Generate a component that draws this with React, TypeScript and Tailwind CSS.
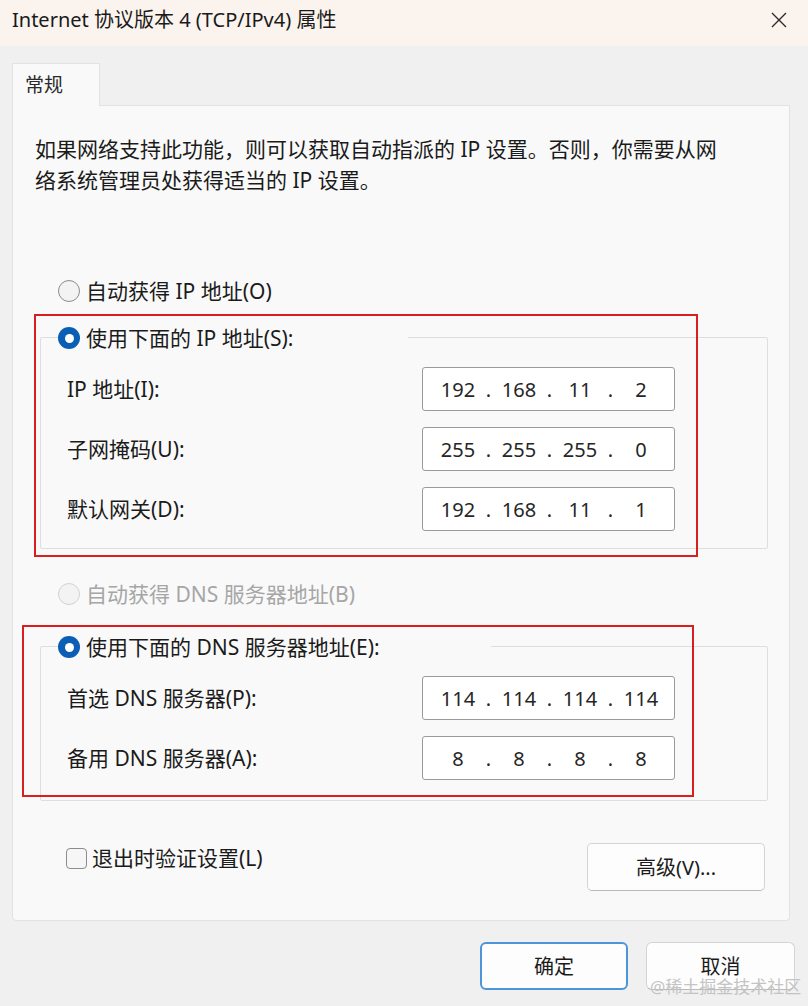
import type { ReactNode } from "react";

const font = "font-['Noto_Sans','Noto_Sans_CJK_SC',sans-serif]";

function Radio({ checked, disabled }: { checked?: boolean; disabled?: boolean }) {
  if (checked) {
    return (
      <span className="flex h-[22px] w-[22px] shrink-0 items-center justify-center rounded-full bg-[#0a5fb4]">
        <span className="h-[9px] w-[9px] rounded-full bg-white" />
      </span>
    );
  }
  return (
    <span
      className={`h-[22px] w-[22px] shrink-0 rounded-full border-[1.5px] bg-[#f3f3f3] ${
        disabled ? "border-[#d2d2d2]" : "border-[#8c8c8c]"
      }`}
    />
  );
}

function RadioRow({ label, checked, disabled }: { label: string; checked?: boolean; disabled?: boolean }) {
  return (
    <div className="flex h-[24px] items-center gap-[6px]">
      <Radio checked={checked} disabled={disabled} />
      <span className={disabled ? "text-[#a6a6a6]" : "text-[#1b1b1b]"}>{label}</span>
    </div>
  );
}

function IpField({ octets }: { octets: string[] }) {
  return (
    <div className="flex h-[44px] w-[253px] items-center rounded-[3px] border border-[#9a9a9a] bg-white pl-[11px] text-[20px] text-[#262626]">
      {octets.map((o, i) => (
        <div key={i} className="flex items-center">
          {i > 0 && <span className="w-[13px] text-center">.</span>}
          <span className="w-[48px] text-center">{o}</span>
        </div>
      ))}
    </div>
  );
}

function FieldRow({ label, octets }: { label: string; octets: string[] }) {
  return (
    <div className="flex items-center">
      <span className="w-[381px] pl-[26px] text-[#1b1b1b]">{label}</span>
      <IpField octets={octets} />
    </div>
  );
}

function GroupBox({ label, capWidth, children }: { label: string; capWidth: string; children: ReactNode }) {
  return (
    <div className="ml-[27px] mr-[21px] rounded-[2px] border border-[#dedede]">
      <div className={`-mt-[12px] ml-[17px] bg-[#f9f9f9] ${capWidth}`}>
        <RadioRow label={label} checked />
      </div>
      {children}
    </div>
  );
}

export default function App() {
  return (
    <div className={`relative flex h-[1006px] w-[808px] flex-col overflow-hidden bg-[#f0f0f0] text-[21px] leading-[31px] ${font}`}>
      {/* 标题栏 */}
      <div className="flex h-[46px] items-start justify-between bg-[#fbf3ed] pl-[12px] pr-[21px] pt-[7px]">
        <span className="text-[20px] leading-[26px] text-[#1a1a1a]">Internet 协议版本 4 (TCP/IPv4) 属性</span>
        <svg width="16" height="16" viewBox="0 0 16 16" className="mt-[5px]">
          <path d="M1 1L15 15M15 1L1 15" stroke="#2b2b2b" strokeWidth="1.4" />
        </svg>
      </div>

      {/* 选项卡 */}
      <div className="mt-[17px] pl-[12px] pr-[18px]">
        <div className="relative z-10 -mb-px flex h-[43px] w-[88px] items-center border border-b-0 border-[#e2e2e2] bg-[#f9f9f9] pl-[12px] text-[19px] text-[#2a2a2a]">
          常规
        </div>
        <div className="flex flex-col rounded-b-[4px] border border-[#e2e2e2] bg-[#f9f9f9] pb-[29px]">
          <p className="pl-[22px] pt-[28px] text-[#1b1b1b]">
            如果网络支持此功能，则可以获取自动指派的 IP 设置。否则，你需要从网
            <br />
            络系统管理员处获得适当的 IP 设置。
          </p>

          <div className="ml-[45px] mt-[83px]">
            <RadioRow label="自动获得 IP 地址(O)" />
          </div>

          <div className="mt-[34px]">
            <GroupBox label="使用下面的 IP 地址(S):" capWidth="w-[350px]">
              <div className="mt-[17px] flex flex-col gap-[16px] pb-[17px]">
                <FieldRow label="IP 地址(I):" octets={["192", "168", "11", "2"]} />
                <FieldRow label="子网掩码(U):" octets={["255", "255", "255", "0"]} />
                <FieldRow label="默认网关(D):" octets={["192", "168", "11", "1"]} />
              </div>
            </GroupBox>
          </div>

          <div className="ml-[45px] mt-[33px]">
            <RadioRow label="自动获得 DNS 服务器地址(B)" disabled />
          </div>

          <div className="mt-[40px]">
            <GroupBox label="使用下面的 DNS 服务器地址(E):" capWidth="w-[433px]">
              <div className="mt-[17px] flex flex-col gap-[16px] pb-[20px]">
                <FieldRow label="首选 DNS 服务器(P):" octets={["114", "114", "114", "114"]} />
                <FieldRow label="备用 DNS 服务器(A):" octets={["8", "8", "8", "8"]} />
              </div>
            </GroupBox>
          </div>

          <div className="mt-[42px] flex items-start justify-between pl-[53px] pr-[24px]">
            <label className="mt-[4px] flex items-center gap-[5px] leading-[22px] text-[#1b1b1b]">
              <span className="h-[21px] w-[21px] rounded-[4px] border-[1.5px] border-[#8c8c8c] bg-[#f6f6f6]" />
              退出时验证设置(L)
            </label>
            <button className="h-[48px] w-[178px] rounded-[5px] border border-[#d4d4d4] border-b-[#b9b9b9] bg-[#fdfdfd] text-[20px] text-[#1b1b1b]">
              高级(V)...
            </button>
          </div>
        </div>
      </div>

      {/* 底部按钮 */}
      <div className="mt-[21px] flex justify-end gap-[18px] pr-[13px]">
        <button className="h-[48px] w-[148px] rounded-[6px] border-2 border-[#4d94d8] bg-[#fdfdfd] text-[20px] text-[#1b1b1b]">
          确定
        </button>
        <button className="h-[48px] w-[149px] rounded-[6px] border border-[#d4d4d4] border-b-[#b9b9b9] bg-[#fdfdfd] text-[20px] text-[#1b1b1b]">
          取消
        </button>
      </div>

      {/* 红色标注框 */}
      <div className="pointer-events-none absolute left-[34px] top-[314px] h-[243px] w-[664px] border-2 border-[#d81e1e]" />
      <div className="pointer-events-none absolute left-[22px] top-[625px] h-[172px] w-[672px] border-2 border-[#d81e1e]" />

      {/* 水印 */}
      <span className="pointer-events-none absolute left-[650px] top-[975px] text-[17px] leading-[24px] text-[#c4c4c4]">
        @稀土掘金技术社区
      </span>
    </div>
  );
}
